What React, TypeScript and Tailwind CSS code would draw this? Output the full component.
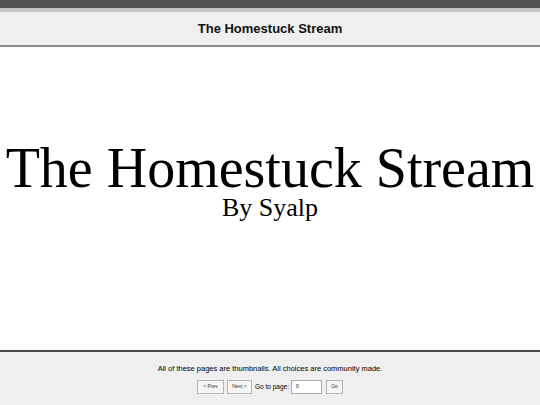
export default function App() {
  return (
    <div className="flex h-[405px] w-[540px] flex-col overflow-hidden bg-white" style={{ fontFamily: '"Liberation Sans", Arial, sans-serif' }}>
      <div className="h-[8px] shrink-0 bg-[#545454]" />
      <div className="h-[4px] shrink-0 bg-[#c6c6c6]" />
      <div className="flex h-[35px] shrink-0 items-center justify-center border-b-2 border-[#8a8a8a] bg-[#efefef] pt-[1px]">
        <span className="text-[13px] font-bold text-[#111]">The Homestuck Stream</span>
      </div>
      <div className="flex flex-1 flex-col items-center pt-[95px] text-black" style={{ fontFamily: '"Liberation Serif", "Times New Roman", serif' }}>
        <div className="whitespace-nowrap text-[56px] leading-[52px]">The Homestuck Stream</div>
        <div className="mt-[1px] text-[26px] leading-[26px]">By Syalp</div>
      </div>
      <div className="flex h-[55px] shrink-0 flex-col items-center border-t-2 border-[#4a4a4a] bg-[#efefef] pt-[12px]">
        <div className="text-[7.5px] leading-[10px] text-black">All of these pages are thumbnails. All choices are community made.</div>
        <div className="mt-[6px] flex items-center text-black">
          <button className="h-[14px] w-[27px] border border-[#b5b5b5] bg-[#f5f5f5] text-[5px] text-[#333]">&lt; Prev</button>
          <button className="ml-[3px] h-[14px] w-[25px] border border-[#b5b5b5] bg-[#f5f5f5] text-[5px] text-[#333]">Next &gt;</button>
          <span className="ml-[3px] text-[6.5px]">Go to page:</span>
          <div className="ml-[2px] flex h-[14px] w-[31px] items-center border border-[#aaa] bg-white pl-[4px] text-[5px]">0</div>
          <button className="ml-[4px] h-[14px] w-[17px] border border-[#b5b5b5] bg-[#f5f5f5] text-[5px] text-[#333]">Go</button>
        </div>
      </div>
    </div>
  );
}
